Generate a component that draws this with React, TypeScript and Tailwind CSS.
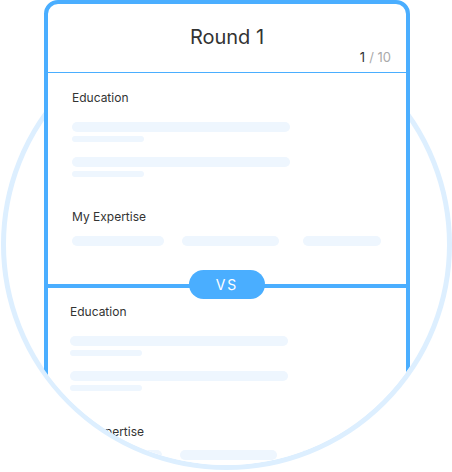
const barColor = "bg-[#eef6fe]";

function Label({ children }: { children: string }) {
  return <p className="text-[12px] leading-4 text-[#333]">{children}</p>;
}

function EducationBars() {
  return (
    <div className="flex flex-col">
      <div className={`mt-4 h-[10px] w-[218px] rounded-full ${barColor}`} />
      <div className={`mt-1 h-[6px] w-[72px] rounded-full ${barColor}`} />
      <div className={`mt-[15px] h-[10px] w-[218px] rounded-full ${barColor}`} />
      <div className={`mt-1 h-[6px] w-[72px] rounded-full ${barColor}`} />
    </div>
  );
}

function ExpertiseBars() {
  return (
    <div className="flex items-center">
      <div className={`h-[10px] w-[92px] rounded-full ${barColor}`} />
      <div className={`ml-[18px] h-[10px] w-[97px] rounded-full ${barColor}`} />
      <div className={`ml-[24px] h-[10px] w-[78px] rounded-full ${barColor}`} />
    </div>
  );
}

function Candidate({ top }: { top: boolean }) {
  return (
    <div className={top ? "pl-6 pt-[17px] pb-[38px]" : "pl-[22px] pt-4 pb-10"}>
      <Label>Education</Label>
      <EducationBars />
      <div className={top ? "mt-8" : "mt-[33px]"}>
        <Label>My Expertise</Label>
      </div>
      <div className={top ? "mt-[11px]" : "mt-[10px]"}>
        <ExpertiseBars />
      </div>
    </div>
  );
}

export default function App() {
  return (
    <div
      className="relative h-[472px] w-[452px] overflow-hidden bg-white"
      style={{ fontFamily: "Inter, 'Noto Sans', sans-serif" }}
    >
      {/* ring, behind the card */}
      <div className="absolute left-px top-[19px] h-[451px] w-[451px] rounded-full border-[5px] border-[#ddefff]" />
      {/* card, clipped by the inside of the ring below its middle */}
      <div className="relative h-full w-full [clip-path:path('M0_0_H452_V244_H447_A221_221_0_0_1_5_244_H0_Z')]">
        <div className="ml-[44px] h-[520px] w-[366px] rounded-t-[14px] border-4 border-[#4aaeff] bg-white">
          <div className="flex h-[68px] flex-col">
            <h1 className="pt-[21px] text-center text-[20px] leading-6 text-[#333]">
              Round 1
            </h1>
            <div className="flex justify-end pr-[15px] text-[13px] leading-4">
              <span className="text-[#333]">1</span>
              <span className="ml-1 text-[#aaa]">/ 10</span>
            </div>
          </div>
          <div className="h-px bg-[#4aaeff]" />
          <Candidate top />
          <div className="relative -mx-1 h-1 bg-[#4aaeff]">
            <div className="absolute left-1/2 top-1/2 flex h-[29px] w-[76px] -translate-x-1/2 -translate-y-[55%] items-center justify-center rounded-full bg-[#4aaeff] text-[14px] tracking-[2px] text-white">
              VS
            </div>
          </div>
          <Candidate top={false} />
        </div>
      </div>
    </div>
  );
}
